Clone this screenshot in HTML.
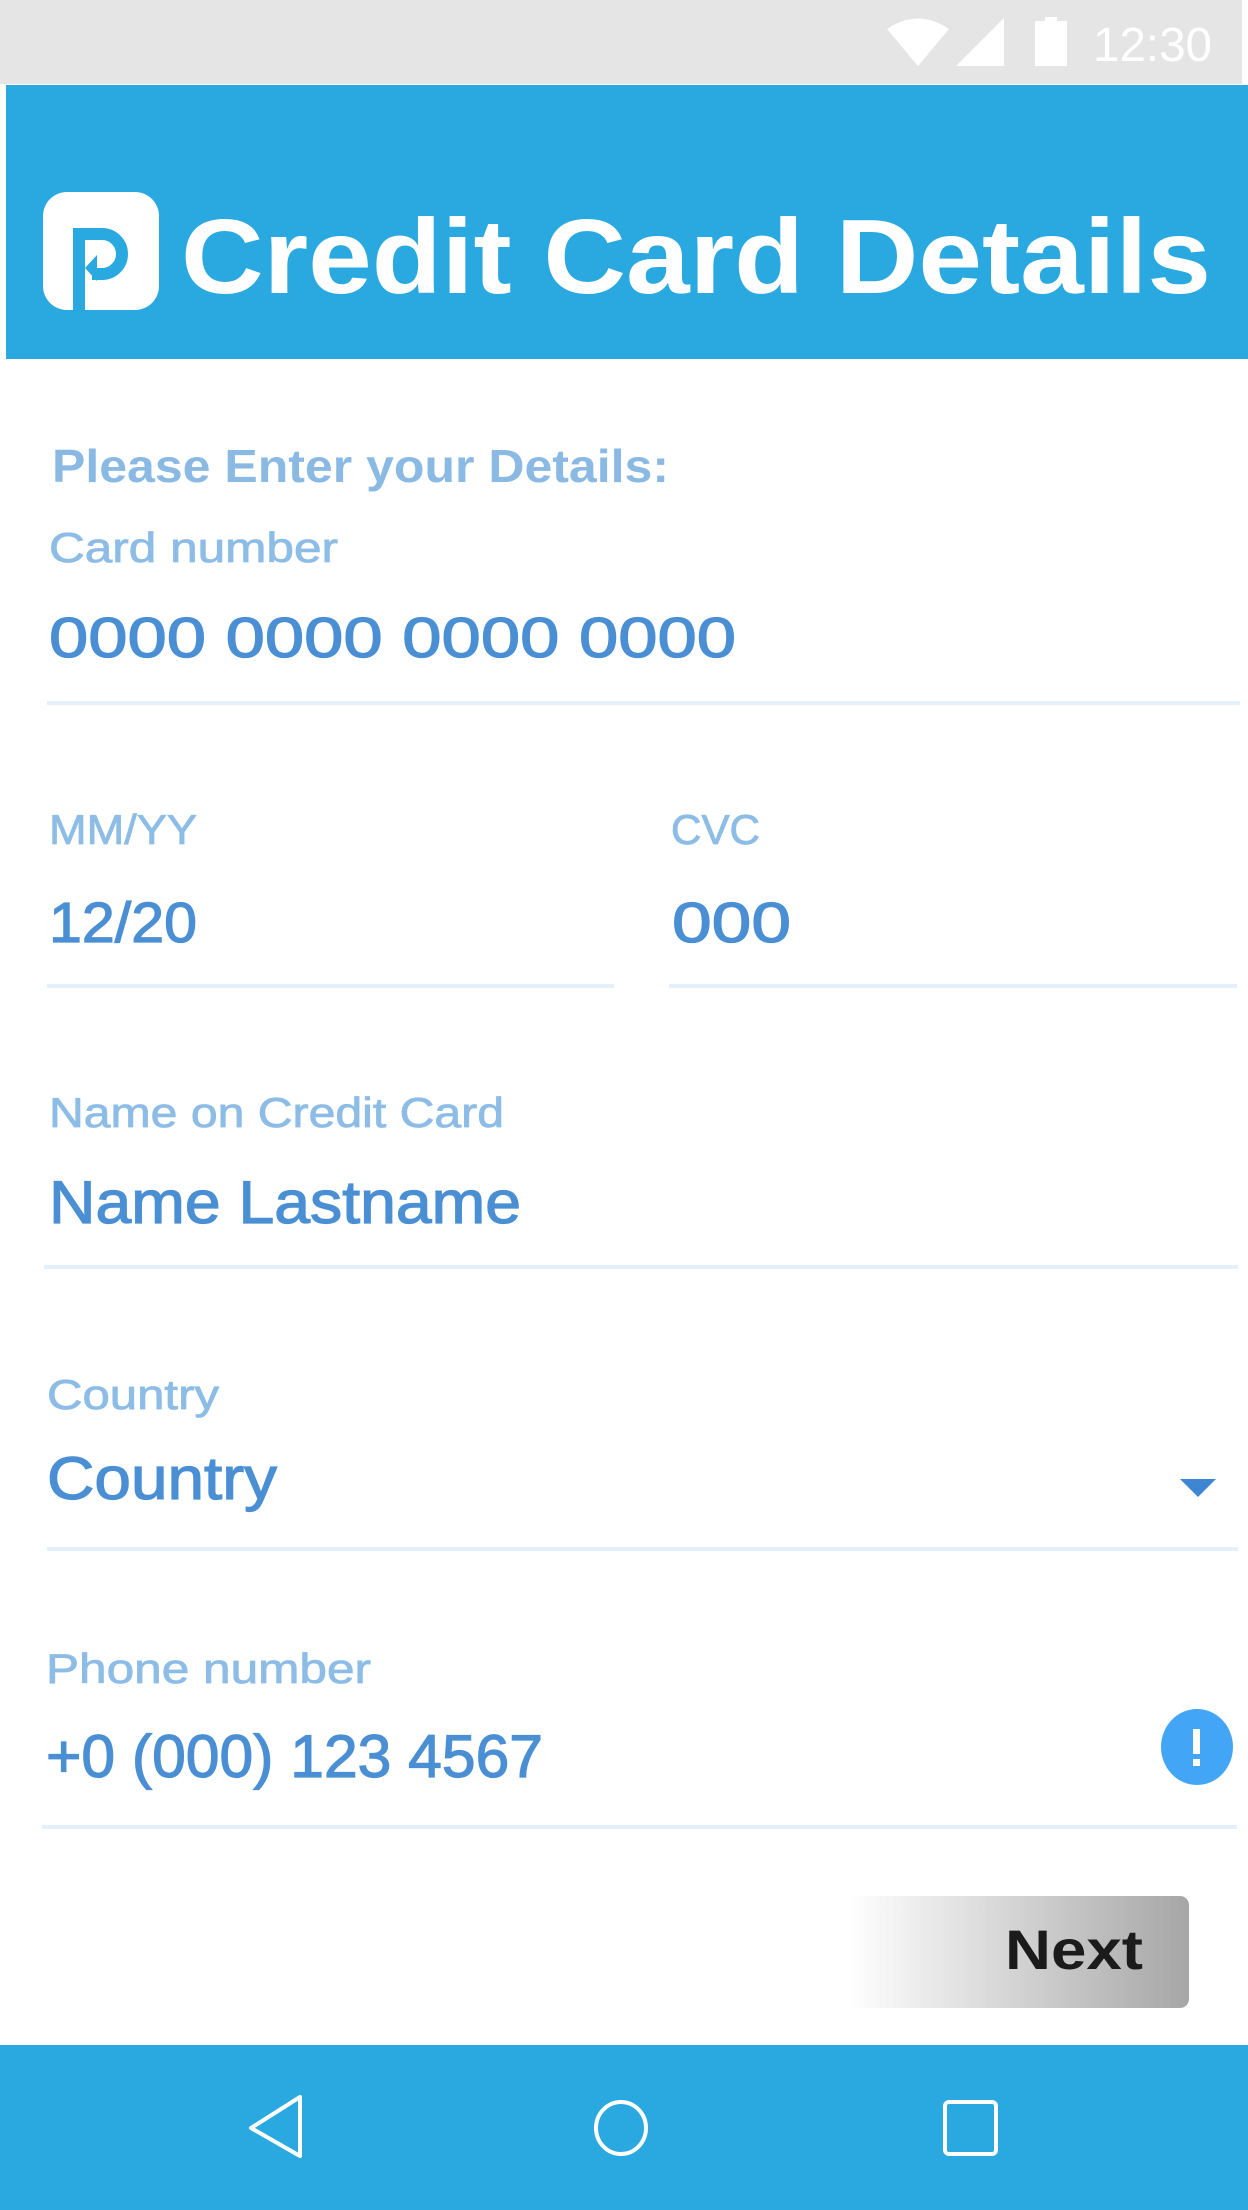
<!DOCTYPE html>
<html><head><meta charset="utf-8"><style>
html,body{margin:0;padding:0;background:#fff;width:1248px;height:2210px;overflow:hidden}
svg{display:block}
text{font-family:"Liberation Sans",sans-serif}
.v{stroke:#4a8fd4;stroke-width:1.2}
.l{stroke:#8dbde6;stroke-width:0.8}
</style></head><body>
<svg width="1248" height="2210" viewBox="0 0 1248 2210" xmlns="http://www.w3.org/2000/svg">
<defs>
<linearGradient id="g" x1="0" x2="1" y1="0" y2="0">
<stop offset="0" stop-color="#ffffff"/><stop offset="1" stop-color="#a6a6a6"/>
</linearGradient>
</defs>
<rect x="0" y="0" width="1248" height="2210" fill="#fff"/>
<!-- status bar -->
<rect x="0" y="0" width="1242" height="84" fill="#e5e5e5"/>
<path d="M887 29 Q918 8 949 29 L918 66 Z" fill="#fff"/>
<path d="M956 66 L1004 18 L1004 66 Z" fill="#fff"/>
<rect x="1035" y="21" width="32" height="45" fill="#fff"/>
<rect x="1045" y="17" width="12" height="5" fill="#fff"/>
<text x="1093" y="61" font-size="48" fill="#fff" textLength="119" lengthAdjust="spacingAndGlyphs">12:30</text>
<!-- header -->
<rect x="6" y="85" width="1242" height="274" fill="#2aa9e0"/>
<rect x="43" y="192" width="116" height="118" rx="24" fill="#fff"/>
<rect x="73" y="228" width="12" height="82" fill="#2aa9e0"/>
<path d="M79 234 L102 234 A20 20 0 0 1 102 274 L92 274" fill="none" stroke="#2aa9e0" stroke-width="12"/>
<path d="M85 268 L97 255 L97 281 Z" fill="#2aa9e0"/>
<text x="181" y="293" font-size="106" font-weight="bold" fill="#fff" textLength="1030" lengthAdjust="spacingAndGlyphs">Credit Card Details</text>
<!-- form -->
<text x="52" y="482" font-size="46" font-weight="bold" fill="#8ab9e4" textLength="617" lengthAdjust="spacingAndGlyphs">Please Enter your Details:</text>
<text class="l" x="49" y="562" font-size="42" fill="#8dbde6" textLength="289" lengthAdjust="spacingAndGlyphs">Card number</text>
<text class="v" x="49" y="657" font-size="57" fill="#4a8fd4" textLength="687" lengthAdjust="spacingAndGlyphs">0000 0000 0000 0000</text>
<rect x="47" y="701" width="1193" height="4" fill="#e4f0fb"/>

<text class="l" x="49" y="844" font-size="42" fill="#8dbde6" textLength="148" lengthAdjust="spacingAndGlyphs">MM/YY</text>
<text class="l" x="671" y="844" font-size="42" fill="#8dbde6" textLength="89" lengthAdjust="spacingAndGlyphs">CVC</text>
<text class="v" x="49" y="942" font-size="57" fill="#4a8fd4" textLength="148" lengthAdjust="spacingAndGlyphs">12/20</text>
<text class="v" x="672" y="942" font-size="57" fill="#4a8fd4" textLength="119" lengthAdjust="spacingAndGlyphs">000</text>
<rect x="47" y="984" width="567" height="4" fill="#e4f0fb"/>
<rect x="669" y="984" width="568" height="4" fill="#e4f0fb"/>

<text class="l" x="49" y="1127" font-size="42" fill="#8dbde6" textLength="455" lengthAdjust="spacingAndGlyphs">Name on Credit Card</text>
<text class="v" x="49" y="1223" font-size="60" fill="#4a8fd4" textLength="472" lengthAdjust="spacingAndGlyphs">Name Lastname</text>
<rect x="44" y="1265" width="1194" height="4" fill="#e4f0fb"/>

<text class="l" x="47" y="1409" font-size="42" fill="#8dbde6" textLength="172" lengthAdjust="spacingAndGlyphs">Country</text>
<text class="v" x="47" y="1499" font-size="60" fill="#4a8fd4" textLength="230" lengthAdjust="spacingAndGlyphs">Country</text>
<path d="M1180 1479 L1216 1479 L1198 1497 Z" fill="#3f86d2"/>
<rect x="47" y="1547" width="1191" height="4" fill="#e4f0fb"/>

<text class="l" x="46" y="1683" font-size="42" fill="#8dbde6" textLength="325" lengthAdjust="spacingAndGlyphs">Phone number</text>
<text class="v" x="46" y="1777" font-size="60" fill="#4a8fd4" textLength="497" lengthAdjust="spacingAndGlyphs">+0 (000) 123 4567</text>
<ellipse cx="1197" cy="1747" rx="36" ry="38" fill="#42a5f5"/>
<rect x="1193" y="1729" width="7" height="25" fill="#fff"/>
<rect x="1193" y="1759" width="7" height="7" fill="#fff"/>
<rect x="42" y="1825" width="1195" height="4" fill="#e4f0fb"/>

<!-- next -->
<rect x="848" y="1896" width="341" height="112" rx="9" fill="url(#g)"/>
<text x="1005" y="1969" font-size="56" font-weight="bold" fill="#1b1b1b" textLength="138" lengthAdjust="spacingAndGlyphs">Next</text>

<!-- nav -->
<rect x="0" y="2045" width="1248" height="165" fill="#2aa9e0"/>
<path d="M300 2097 L300 2156 L251 2128 Z" fill="none" stroke="#fff" stroke-width="4" stroke-linejoin="round"/>
<ellipse cx="621" cy="2128" rx="25" ry="26" fill="none" stroke="#fff" stroke-width="4"/>
<rect x="945" y="2102" width="51" height="52" rx="4" fill="none" stroke="#fff" stroke-width="4"/>
</svg>
</body></html>
